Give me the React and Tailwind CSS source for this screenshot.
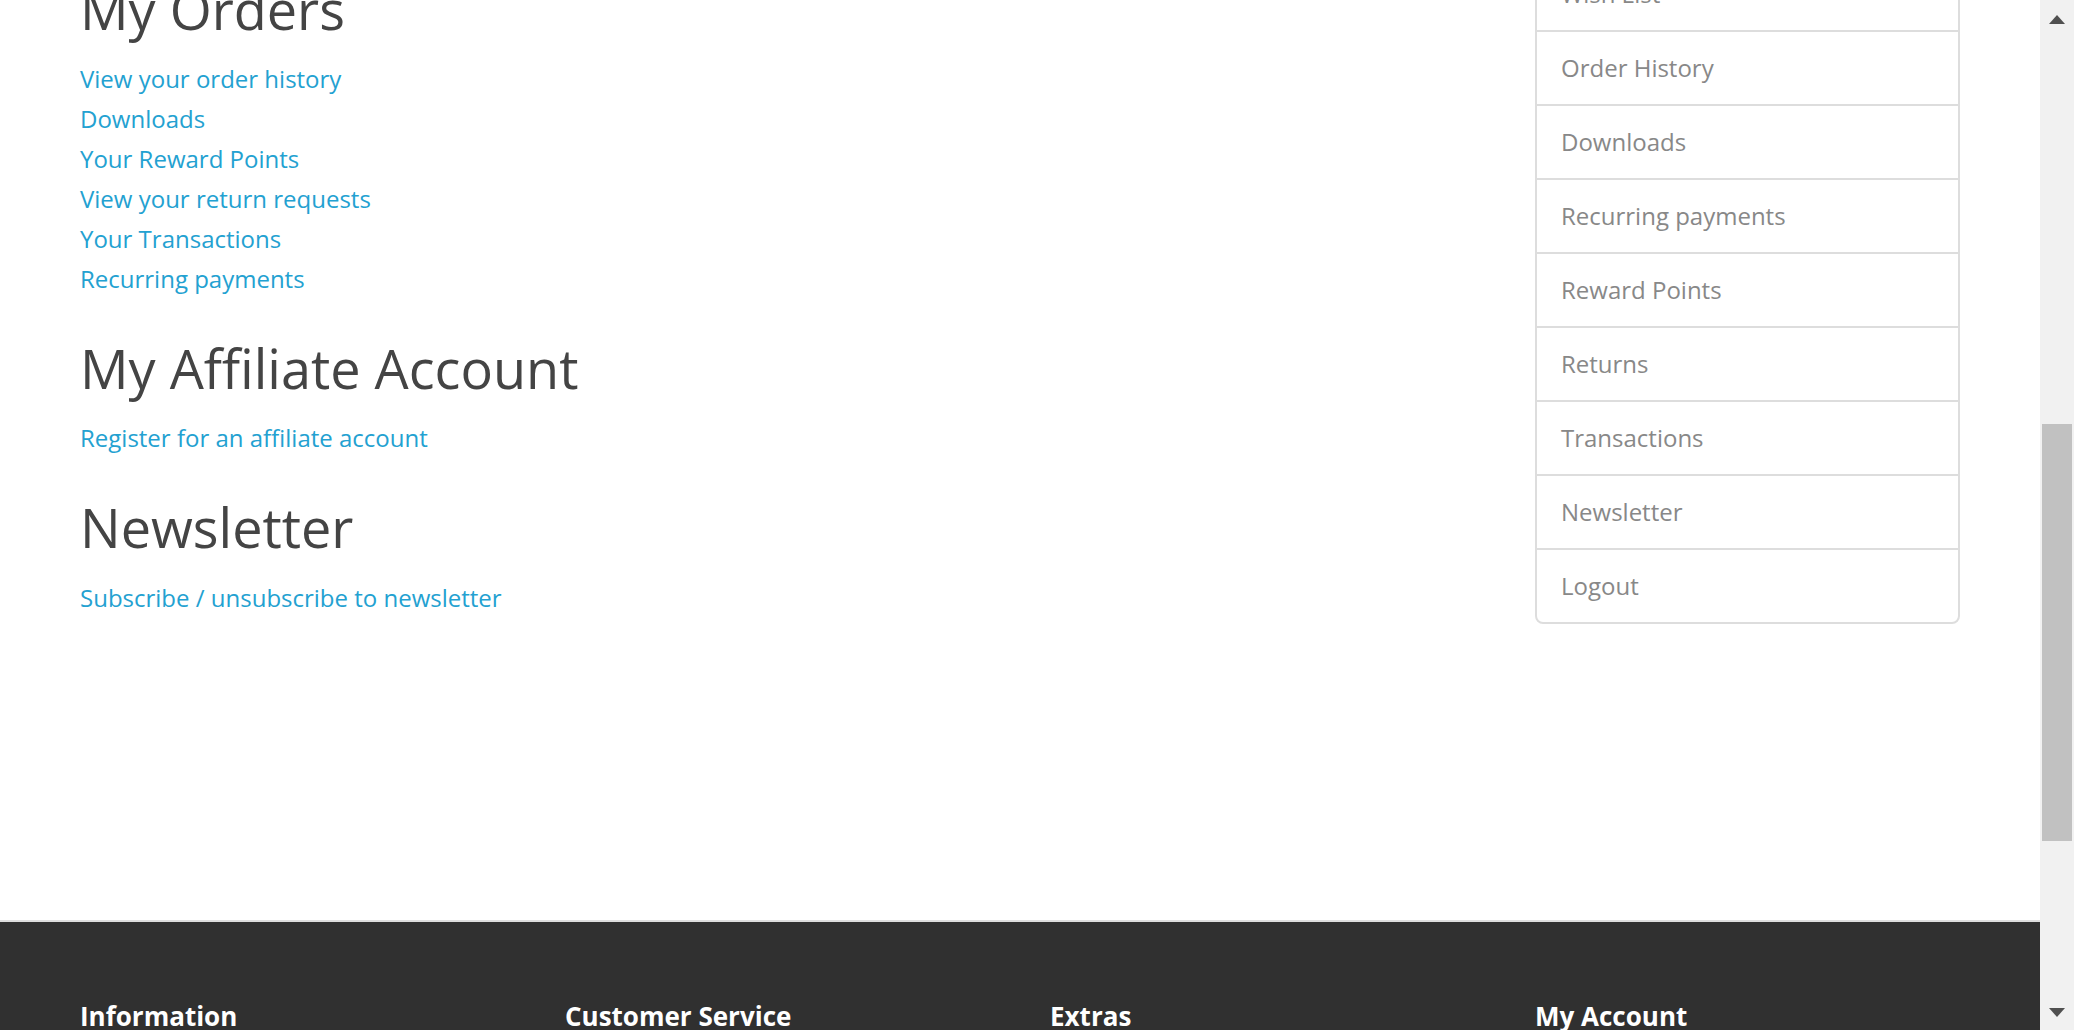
import React from "react";

const orders = [
  "View your order history",
  "Downloads",
  "Your Reward Points",
  "View your return requests",
  "Your Transactions",
  "Recurring payments",
];

const side = [
  "Wish List",
  "Order History",
  "Downloads",
  "Recurring payments",
  "Reward Points",
  "Returns",
  "Transactions",
  "Newsletter",
  "Logout",
];

function H2({ children, className = "" }) {
  return (
    <h2 className={"text-[54px] leading-[59.4px] font-normal text-[#444] whitespace-nowrap " + className}>
      {children}
    </h2>
  );
}

function Links({ items }) {
  return (
    <ul className="mt-[20px] flex flex-col">
      {items.map((t) => (
        <li key={t} className="text-[24px] leading-[40px]">
          <a className="text-[#23a1d1]" href="#">{t}</a>
        </li>
      ))}
    </ul>
  );
}

export default function App() {
  return (
    <div className="flex h-[1030px] w-[2074px] overflow-hidden bg-white font-['Open_Sans',sans-serif]">
      <div className="flex w-[2040px] flex-none flex-col">
        <main className="h-[920px] flex-none overflow-hidden">
          <div className="mx-[50px] flex">
            <div className="w-[1455px] flex-none px-[30px]">
              <div className="flex flex-col">
                <H2 className="-mt-[20.4px]">My Orders</H2>
                <Links items={orders} />
                <H2 className="mt-[40px]">My Affiliate Account</H2>
                <Links items={["Register for an affiliate account"]} />
                <H2 className="mt-[40px]">Newsletter</H2>
                <Links items={["Subscribe / unsubscribe to newsletter"]} />
              </div>
            </div>
            <aside className="w-[485px] flex-none px-[30px]">
              <div className="-mt-[44px] flex flex-col">
                {side.map((t, i) => (
                  <a
                    key={t}
                    href="#"
                    className={
                      "block border-2 border-[#ddd] bg-white px-[24px] py-[16px] text-[24px] leading-[40px] text-[#888] " +
                      (i === side.length - 1 ? "rounded-b-[8px]" : "-mb-[2px]")
                    }
                  >
                    {t}
                  </a>
                ))}
              </div>
            </aside>
          </div>
        </main>
        <footer className="flex-1 overflow-hidden border-t-2 border-[#ddd] bg-[#303030] pt-[60px] text-[#e2e2e2]">
          <div className="mx-[50px] flex">
            {["Information", "Customer Service", "Extras", "My Account"].map((t) => (
              <div key={t} className="w-[485px] flex-none px-[30px]">
                <h5 className="mt-[20px] text-[26px] leading-[28.6px] font-bold text-white">{t}</h5>
              </div>
            ))}
          </div>
        </footer>
      </div>
      <div className="flex w-[34px] flex-none flex-col bg-[#f1f1f1]">
        <div className="flex h-[34px] flex-none justify-center pt-[15px]">
          <svg width="16" height="9" viewBox="0 0 16 9">
            <polygon points="8,0 16,9 0,9" fill="#505050" />
          </svg>
        </div>
        <div className="h-[390px] flex-none" />
        <div className="mx-[2px] h-[417px] flex-none bg-[#c1c1c1]" />
        <div className="flex-1" />
        <div className="flex h-[34px] flex-none justify-center pt-[12px]">
          <svg width="16" height="9" viewBox="0 0 16 9">
            <polygon points="0,0 16,0 8,9" fill="#505050" />
          </svg>
        </div>
      </div>
    </div>
  );
}
